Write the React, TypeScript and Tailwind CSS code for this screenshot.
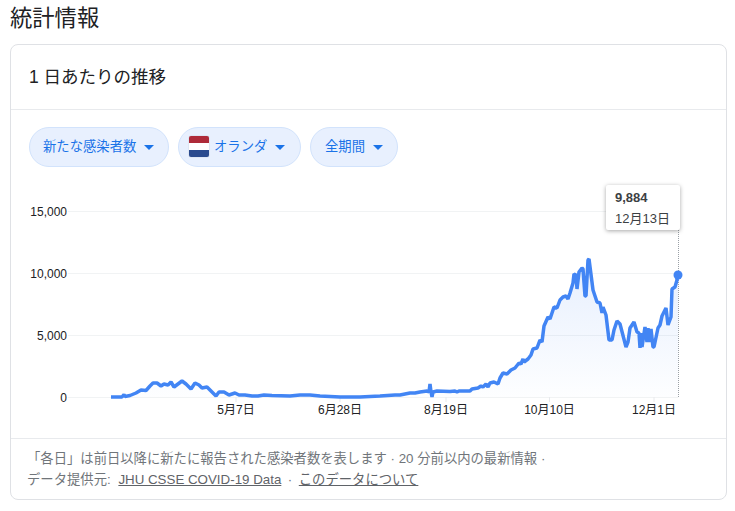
const line: [number, number][] = [[111,397],[122,397],[124,394.5],[125,396.5],[130,395.5],[136,393],[141,390],[146,390.5],[150,386],[153,383],[157,383],[161,386],[164,384],[168,385],[171,382],[174,387],[178,384],[182,381],[186,384],[191,389],[195,383],[199,385],[202,388],[207,387],[211,391],[216,396],[219,392],[224,392],[229,395],[235,393],[239,395],[245,395],[252,396],[258,396],[264,395],[272,395.5],[290,396],[300,395],[310,395],[320,396],[340,397],[360,397],[380,396],[395,395],[400,395],[410,393],[415,393],[420,392],[427,391],[429,392],[430,384],[431,392],[432,397],[433,392],[437,391],[450,391.5],[455,391],[457,392],[459,391],[470,391],[472,389],[478,388],[481,386],[483,387],[486,384],[488,387],[490,383],[494,382],[498,384],[500,378],[503,373],[507,374],[511,370],[515,368],[519,363],[521,364],[523,359],[524,362],[528,359],[531,355],[533,349],[537,348],[540,340],[542,342],[544,326],[548,317],[550,319],[554,307],[557,308],[560,300],[563,297],[566,296],[568,299],[570,293],[573,283],[574,274],[576,275],[577,289],[579,272],[582,268],[583,269],[585,296],[586,296],[588,260],[589,259],[593,290],[597,302],[600,303],[602,313],[603,307],[606,315],[609,340],[612,340],[614,330],[617,321],[620,324],[626,347],[628,342],[630,328],[634,322],[637,332],[639,333],[640,348],[641,333],[642,347],[645,327],[647,342],[648,328],[649,342],[651,329],[653,347],[654,347],[658,328],[660,325],[662,316],[666,308],[668,325],[671,317],[672,289],[675,287],[677,280],[678,275]];

const OX = 11;
const OY = 168;
const pts = line.map(([x, y]) => `${x - OX},${y - OY}`).join(" ");
const area = `${111 - OX},${397 - OY} ${pts} ${678 - OX},${397 - OY}`;

const grid = [
  { y: 211, label: "15,000" },
  { y: 273, label: "10,000" },
  { y: 335, label: "5,000" },
  { y: 397, label: "0" },
];
const xs = [
  { x: 236, label: "5月7日" },
  { x: 340, label: "6月28日" },
  { x: 446, label: "8月19日" },
  { x: 549.5, label: "10月10日" },
  { x: 654, label: "12月1日" },
];

function Caret() {
  return <span className="ml-[8px] h-0 w-0 border-x-[5px] border-t-[5px] border-x-transparent border-t-[#1a73e8]" />;
}

function Flag() {
  return (
    <span className="mr-[5px] flex h-[21px] w-5 -translate-y-px flex-col overflow-hidden rounded-[2px] shadow-[0_0_1px_rgba(0,0,0,0.4)]">
      <span className="h-[7px] bg-[#ae2a39]" />
      <span className="h-[7px] bg-white" />
      <span className="h-[7px] bg-[#2a4a8e]" />
    </span>
  );
}

function Chip({ children, className }: { children: React.ReactNode; className: string }) {
  return (
    <div className={`flex h-10 items-center rounded-[20px] border border-[#d2e3fc] bg-[#e8f0fe] text-[13.33px] text-[#1a73e8] ${className}`}>
      {children}
    </div>
  );
}

export default function App() {
  return (
    <div
      className="h-[511px] w-[735px] overflow-hidden bg-white px-[10px] text-[#202124]"
      style={{ fontFamily: '"Liberation Sans", "Noto Sans CJK JP", sans-serif' }}
    >
      <h2 className="h-11 pt-[5px] text-[22.3px] leading-7 font-normal text-[#202124]">統計情報</h2>
      <div className="flex h-[456px] w-[717px] flex-col rounded-lg border border-[#dfe1e5]">
        <div className="flex h-[65px] items-center border-b border-[#e8eaed] pl-[18px] text-[17.5px]">1 日あたりの推移</div>
        <div className="flex gap-[9px] pt-[17px] pl-[18px]">
          <Chip className="w-[140px] pl-[13px]">新たな感染者数<Caret /></Chip>
          <Chip className="w-[123px] pl-[10px]"><Flag />オランダ<Caret /></Chip>
          <Chip className="w-[88px] pl-[14px]">全期間<Caret /></Chip>
        </div>
        <div className="relative h-[271px]">
          <svg width="715" height="271" className="absolute top-px left-0">
            <defs>
              <linearGradient id="fill" x1="0" y1="0" x2="0" y2="1">
                <stop offset="0" stopColor="#4285f4" stopOpacity="0.13" />
                <stop offset="1" stopColor="#4285f4" stopOpacity="0.01" />
              </linearGradient>
            </defs>
            {grid.map((g) => (
              <g key={g.y}>
                <line x1={57} x2={667} y1={g.y - OY + 0.5} y2={g.y - OY + 0.5} stroke="#f1f3f4" />
                <text x={56} y={g.y - OY + 4.5} textAnchor="end" fontSize="12" fill="#202124">{g.label}</text>
              </g>
            ))}
            {xs.map((t) => (
              <g key={t.x}>
                <line x1={t.x - OX} x2={t.x - OX} y1={397 - OY} y2={402 - OY} stroke="#e8eaed" />
                <text x={t.x - OX} y={414 - OY} textAnchor="middle" fontSize="12" fill="#202124">{t.label}</text>
              </g>
            ))}
            <polygon points={area} fill="url(#fill)" />
            <line x1={667.5} x2={667.5} y1={62} y2={230} stroke="#9aa0a6" strokeDasharray="1 1" />
            <polyline points={pts} fill="none" stroke="#4285f4" strokeWidth="3.5" strokeLinejoin="bevel" strokeLinecap="butt" />
            <circle cx={667} cy={107} r={4.5} fill="#4285f4" />
          </svg>
          <div className="absolute top-[18px] left-[595px] flex h-[45px] w-[74px] flex-col justify-center rounded-[2px] bg-white pl-[9px] text-[13px] leading-[21px] shadow-[0_1px_4px_rgba(0,0,0,0.35)]">
            <span className="font-bold text-[#3c4043]">9,884</span>
            <span className="text-[#3c4043]">12月13日</span>
          </div>
        </div>
        <div className="border-t border-[#e8eaed] pt-[9px] pl-[16px] text-[13.33px] leading-[21px] text-[#70757a]">
          <div>「各日」は前日以降に新たに報告された感染者数を表します · 20 分前以内の最新情報 ·</div>
          <div>
            データ提供元: <span className="ml-[4px] text-[#5f6368] underline">JHU CSSE COVID-19 Data</span>
            <span className="mx-[6.5px]">·</span>
            <span className="text-[#5f6368] underline">このデータについて</span>
          </div>
        </div>
      </div>
    </div>
  );
}
